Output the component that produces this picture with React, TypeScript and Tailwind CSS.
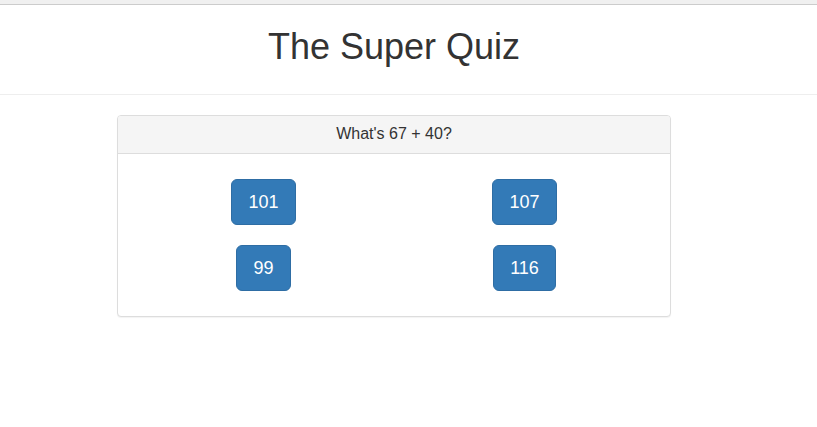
import React from "react";

const answers = [
  ["101", "107"],
  ["99", "116"],
];

export default function App() {
  return (
    <div
      className="min-h-[427px] bg-white text-[#333]"
      style={{ fontFamily: '"Liberation Sans", Arial, Helvetica, sans-serif' }}
    >
      <div className="h-[5px] bg-[#f0f0f0] border-b border-[#cccccc]" />
      <div className="border-b border-[#eeeeee]">
        <div className="w-[788px] pt-[22px] pb-[27px]">
          <h1 className="text-center text-[36px] leading-[39.6px] font-normal text-[#333]">
            The Super Quiz
          </h1>
        </div>
      </div>
      <div className="w-[788px] px-[117px] pt-[20px]">
        <div className="border border-[#dddddd] rounded-[4px] shadow-[0_1px_1px_rgba(0,0,0,0.05)] bg-white">
          <div className="h-[38px] flex items-center justify-center bg-[#f5f5f5] border-b border-[#dddddd] rounded-t-[3px]">
            <h3 className="text-[16px] leading-[17.6px] text-[#333]">What's 67 + 40?</h3>
          </div>
          <div className="p-[15px]">
            {answers.map((row, i) => (
              <div key={i} className="grid grid-cols-2">
                {row.map((a) => (
                  <div key={a} className="flex justify-center py-[10px]">
                    <button className="h-[46px] px-[16px] text-[18px] leading-[24px] text-white bg-[#337ab7] border border-[#2e6da4] rounded-[6px]">
                      {a}
                    </button>
                  </div>
                ))}
              </div>
            ))}
          </div>
        </div>
      </div>
    </div>
  );
}
